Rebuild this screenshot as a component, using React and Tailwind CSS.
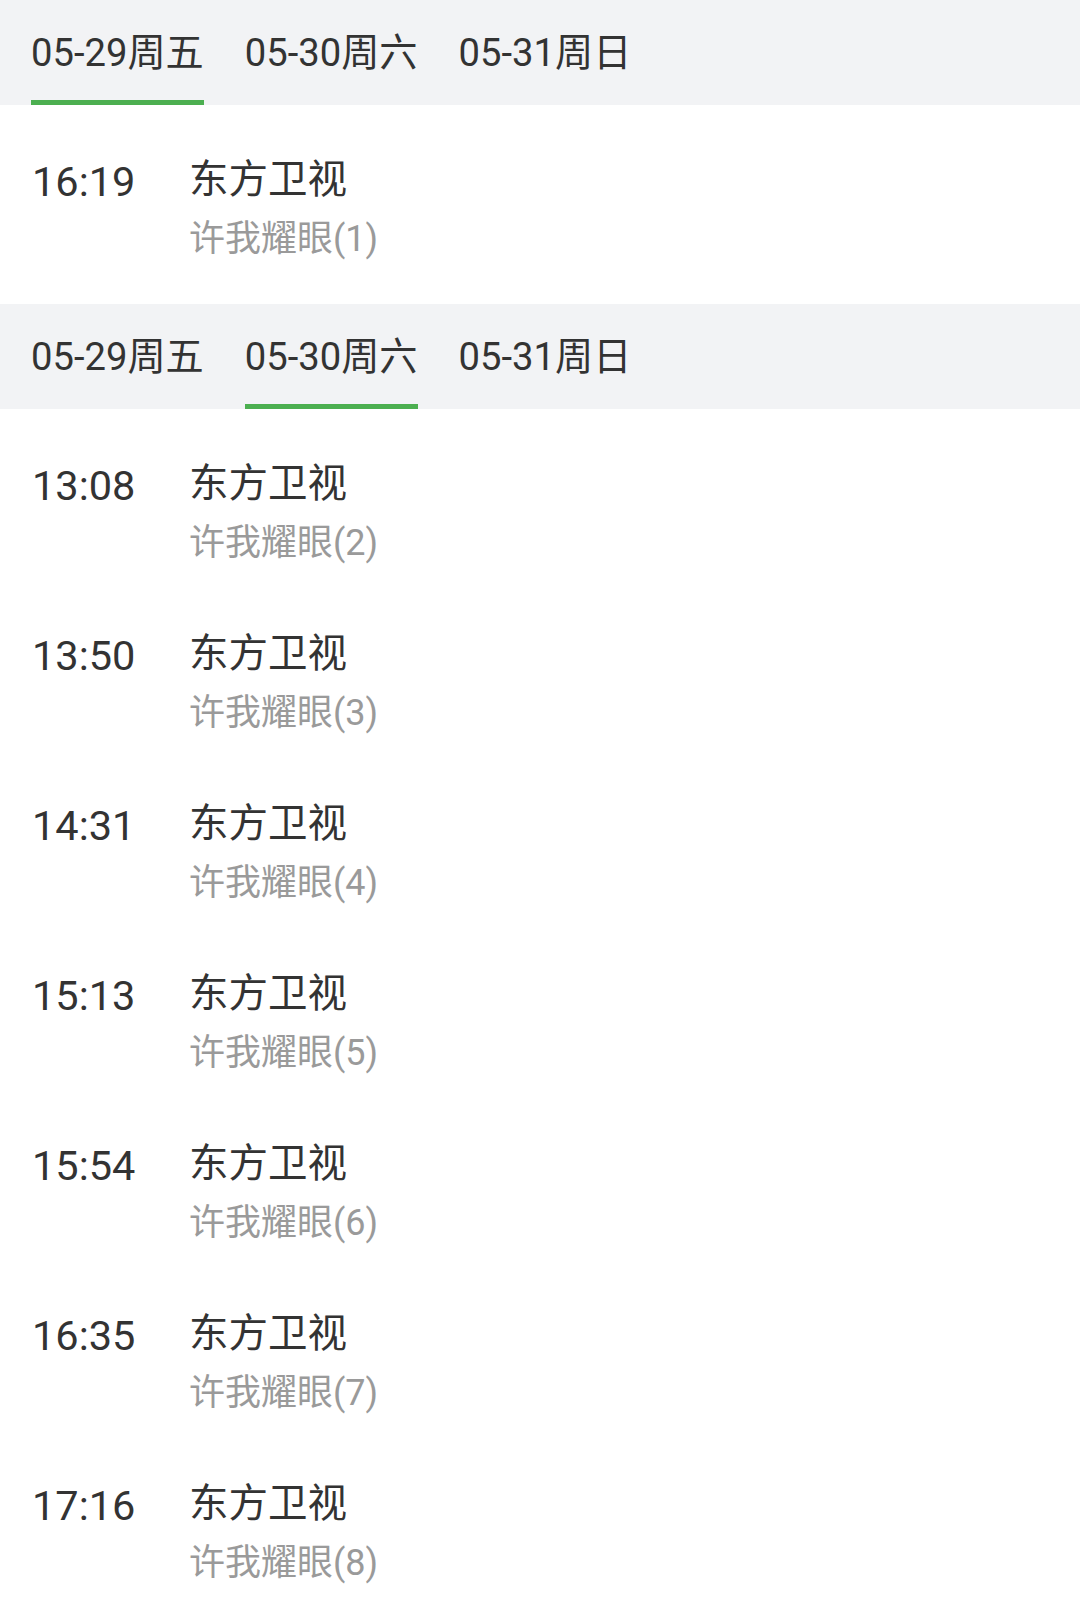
// Program guide: date tabs with a green underline, then a list of airings
// (time on the left, channel + episode on the right).

const DAYS = ["05-29周五", "05-30周六", "05-31周日"];

const SECTIONS = [
  {
    active: 0,
    items: [{ time: "16:19", channel: "东方卫视", title: "许我耀眼(1)" }],
    tail: true,
  },
  {
    active: 1,
    items: [
      { time: "13:08", channel: "东方卫视", title: "许我耀眼(2)" },
      { time: "13:50", channel: "东方卫视", title: "许我耀眼(3)" },
      { time: "14:31", channel: "东方卫视", title: "许我耀眼(4)" },
      { time: "15:13", channel: "东方卫视", title: "许我耀眼(5)" },
      { time: "15:54", channel: "东方卫视", title: "许我耀眼(6)" },
      { time: "16:35", channel: "东方卫视", title: "许我耀眼(7)" },
      { time: "17:16", channel: "东方卫视", title: "许我耀眼(8)" },
    ],
  },
];

function DayTabs({ active }) {
  return (
    <div className="flex h-[105px] gap-[41px] bg-[#f2f3f5] pl-[31px]">
      {DAYS.map((d, i) => (
        <div key={d} className="flex flex-col">
          <div className="flex flex-1 items-center pt-[6px] text-[38.2px] leading-none text-[#333333]">
            {d}
          </div>
          <div className={`h-[5px] ${i === active ? "bg-[#4caf50]" : "bg-transparent"}`} />
        </div>
      ))}
    </div>
  );
}

function Airing({ time, channel, title }) {
  return (
    <div className="h-[170px] pl-[32px] pt-[48px]">
      <div className="flex items-baseline">
        {/* digits sit a touch lower than the CJK channel name */}
        <span className="relative top-[3px] w-[157px] text-[41.5px] leading-[52px] text-[#333333]">
          {time}
        </span>
        <span className="text-[39.5px] leading-[52px] text-[#333333]">{channel}</span>
      </div>
      <div className="mt-[7px] pl-[157px] text-[36px] leading-[52px] text-[#9a9a9a]">{title}</div>
    </div>
  );
}

export default function App() {
  return (
    <div
      className="w-[1080px] bg-white"
      style={{ fontFamily: 'Roboto, "Noto Sans CJK SC", sans-serif' }}
    >
      {SECTIONS.map((s, idx) => (
        <div key={idx}>
          <DayTabs active={s.active} />
          <div className={s.tail ? "pb-[29px]" : ""}>
            {s.items.map((it) => (
              <Airing key={it.time} {...it} />
            ))}
          </div>
        </div>
      ))}
    </div>
  );
}
